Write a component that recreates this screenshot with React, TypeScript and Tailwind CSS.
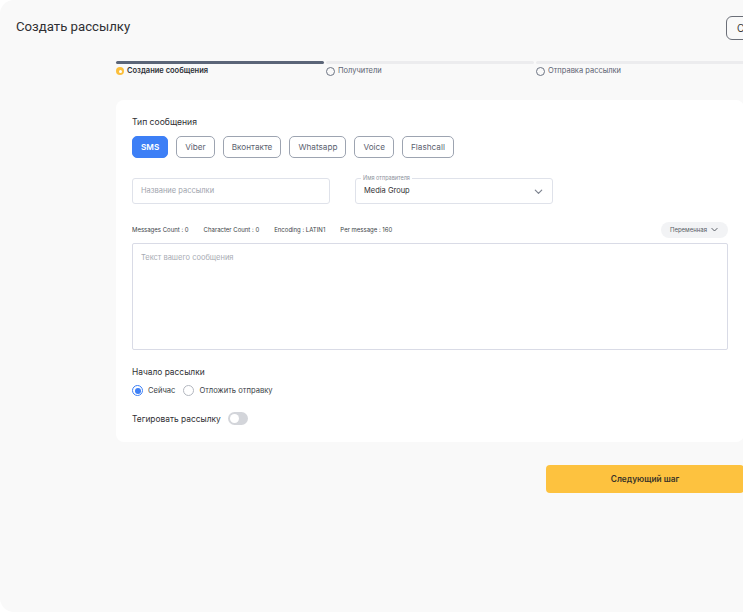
import React from "react";

const font = { fontFamily: "Inter, 'Noto Sans', sans-serif" };

function Chevron({ className = "" }: { className?: string }) {
  return (
    <svg viewBox="0 0 12 12" className={className} fill="none" stroke="currentColor" strokeWidth="1.3" strokeLinecap="round" strokeLinejoin="round">
      <path d="M2.5 4.5 6 8l3.5-3.5" />
    </svg>
  );
}

export default function App() {
  const types = ["SMS", "Viber", "Вконтакте", "Whatsapp", "Voice", "Flashcall"];
  return (
    <div className="w-[743px] h-[612px] overflow-hidden bg-white" style={font}>
      <div className="w-[840px] h-[612px] rounded-l-[14px] bg-[#f9f9f9] flex flex-col">
        <div className="flex items-start h-[61px] pt-[16px] shrink-0">
          <div className="ml-[16px] w-[710px] shrink-0 text-[13.2px] leading-[22px] text-[#2f2f33]" style={{ fontFamily: "Roboto, sans-serif" }}>
            Создать рассылку
          </div>
          <div className="h-[24px] w-[80px] shrink-0 rounded-[6px] border border-[#6b6f78] text-[10px] leading-[22px] pl-[10px] text-[#333]">
            Сохранить
          </div>
        </div>
        <div className="ml-[116px] w-[628px] flex flex-col">
          <div className="grid grid-cols-3 gap-[2px]">
            {[
              { l: "Создание сообщения", active: true },
              { l: "Получители" },
              { l: "Отправка рассылки" },
            ].map((s, i) => (
              <div key={i} className="flex flex-col">
                <div className={`h-[3px] rounded-full ${s.active ? "bg-[#5b6578]" : "bg-[#ececee]"}`} />
                <div className="flex items-center gap-[3px] mt-[2px] h-[10px]">
                  {s.active ? (
                    <span className="w-[8px] h-[8px] rounded-full bg-[#fbbf3c] flex items-center justify-center">
                      <span className="w-[3px] h-[3px] rounded-full bg-white" />
                    </span>
                  ) : (
                    <span className="w-[9px] h-[9px] rounded-full border border-[#6d7483]" />
                  )}
                  <span className={`text-[7.5px] ${s.active ? "font-semibold text-[#2c2f36]" : "text-[#5c6372]"}`}>{s.l}</span>
                </div>
              </div>
            ))}
          </div>

          <div className="mt-[24px] bg-white rounded-[8px] px-[16px] pt-[15px] pb-[15px] h-[342px]">
            <div className="text-[8.6px] leading-[14px] text-[#2f2f33]">Тип сообщения</div>
            <div className="flex gap-[8px] mt-[7px]">
              {types.map((t, i) => (
                <div
                  key={t}
                  className={`h-[22px] px-[8px] rounded-[5px] flex items-center text-[8.2px] ${
                    i === 0 ? "bg-[#3d7ff6] text-white font-semibold border border-[#3d7ff6]" : "border border-[#9da4b1] text-[#5c6270]"
                  }`}
                >
                  {t}
                </div>
              ))}
            </div>

            <div className="flex gap-[25px] mt-[20px]">
              <div className="w-[198px] h-[26px] border border-[#dfe2ea] rounded-[3px] flex items-center px-[8px] text-[7.5px] text-[#a0a4ad]">
                Название рассылки
              </div>
              <div className="relative w-[198px] h-[26px] border border-[#dfe2ea] rounded-[3px] flex items-center px-[8px] text-[7.5px] text-[#2f2f33]">
                <span className="absolute -top-[4px] left-[5px] bg-white px-[2px] text-[5.5px] leading-[7px] text-[#8c919b]">Имя отправителя</span>
                <span className="flex-1">Media Group</span>
                <Chevron className="w-[11px] h-[11px] text-[#7d838f]" />
              </div>
            </div>

            <div className="flex items-center mt-[17px] h-[17px]">
              <div className="flex gap-[15px] text-[6px] text-[#3b3f47] flex-1">
                <span>Messages Count : 0</span>
                <span>Character Count : 0</span>
                <span>Encoding : LATIN1</span>
                <span>Per message : 160</span>
              </div>
              <div className="h-[16px] px-[9px] rounded-full bg-[#f2f3f5] flex items-center gap-[3px] text-[6px] text-[#555a63]">
                Переменная
                <Chevron className="w-[9px] h-[9px] text-[#555a63]" />
              </div>
            </div>

            <div className="mt-[5px] h-[107px] border border-[#d9dbe6] rounded-[2px] px-[8px] pt-[8px] text-[7.5px] text-[#a7abb3]">
              Текст вашего сообщения
            </div>

            <div className="mt-[15px] text-[8.4px] leading-[14px] text-[#2f2f33]">Начало рассылки</div>
            <div className="flex items-center mt-[6px] text-[7.6px] text-[#3b3f47]">
              <span className="w-[11px] h-[11px] rounded-full border border-[#3d7ff6] flex items-center justify-center">
                <span className="w-[6px] h-[6px] rounded-full bg-[#3d7ff6]" />
              </span>
              <span className="ml-[5px]">Сейчас</span>
              <span className="ml-[8px] w-[11px] h-[11px] rounded-full border border-[#b3b7bf]" />
              <span className="ml-[5px]">Отложить отправку</span>
            </div>

            <div className="flex items-center mt-[16px]">
              <span className="text-[8.4px] text-[#2f2f33]">Тегировать рассылку</span>
              <span className="ml-[7px] w-[20px] h-[13px] rounded-full bg-[#d3d5da] flex items-center px-[2px]">
                <span className="w-[9px] h-[9px] rounded-full bg-white" />
              </span>
            </div>
          </div>

          <div className="flex justify-end mt-[23px]">
            <div className="w-[198px] h-[28px] rounded-[4px] bg-[#fdc23f] flex items-center justify-center text-[8.3px] font-semibold text-[#3a3428]">
              Следующий шаг
            </div>
          </div>
        </div>
      </div>
    </div>
  );
}
